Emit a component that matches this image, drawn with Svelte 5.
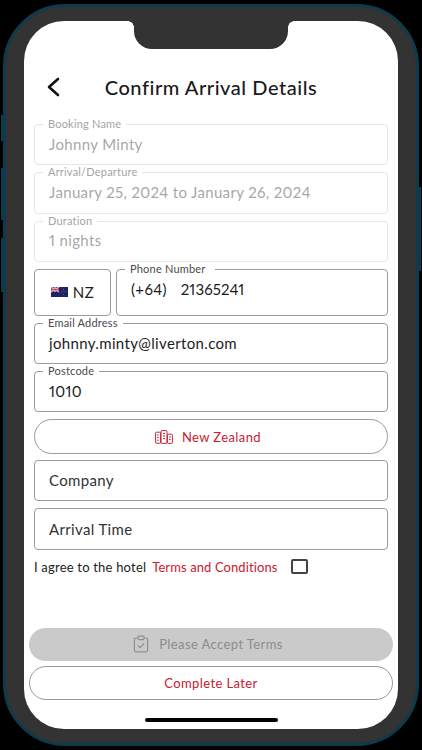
<script>
  const locked = [
    { label: 'Booking Name', value: 'Johnny Minty' },
    { label: 'Arrival/Departure', value: 'January 25, 2024 to January 26, 2024' },
    { label: 'Duration', value: '1 nights' }
  ];

  let agreed = $state(false);
</script>

<div class="phone">
  <span class="side side--mute"></span>
  <span class="side side--up"></span>
  <span class="side side--down"></span>
  <span class="side side--power"></span>

  <main class="screen">
    <div class="notch"></div>

    <header class="header">
      <button type="button" class="back" aria-label="Back">
        <svg width="14" height="20" viewBox="0 0 14 20" fill="none">
          <path d="M12 2 3 10l9 8" stroke="#111" stroke-width="2.6" stroke-linecap="round" stroke-linejoin="round" />
        </svg>
      </button>
      <h1>Confirm Arrival Details</h1>
    </header>

    <form class="form">
      {#each locked as item (item.label)}
        <div class="field field--locked">
          <span class="legend">{item.label}</span>
          <span class="value">{item.value}</span>
        </div>
      {/each}

      <div class="phone-row">
        <button type="button" class="country">
          <svg width="17" height="10" viewBox="0 0 17 10">
            <rect width="17" height="10" fill="#16246b" />
            <path d="M0 0 8 5M8 0 0 5" stroke="#fff" stroke-width="1.3" />
            <path d="M0 0 8 5M8 0 0 5" stroke="#c8202f" stroke-width=".5" />
            <path d="M4 0v5M0 2.5h8" stroke="#fff" stroke-width="1.6" />
            <path d="M4 0v5M0 2.5h8" stroke="#c8202f" stroke-width=".8" />
            <circle cx="12.5" cy="2.5" r=".7" fill="#d8323c" />
            <circle cx="11" cy="5" r=".7" fill="#d8323c" />
            <circle cx="14.2" cy="4.6" r=".7" fill="#d8323c" />
            <circle cx="12.5" cy="7.6" r=".7" fill="#d8323c" />
          </svg>
          NZ
        </button>
        <div class="field field--tall">
          <span class="legend legend--wide">Phone Number</span>
          <span class="value"><span class="dial">(+64)</span><span class="digits">21365241</span></span>
        </div>
      </div>

      <div class="field">
        <span class="legend">Email Address</span>
        <span class="value">johnny.minty@liverton.com</span>
      </div>
      <div class="field">
        <span class="legend">Postcode</span>
        <span class="value">1010</span>
      </div>

      <button type="button" class="region">
        <svg width="18" height="14" viewBox="0 0 18 14" fill="none" stroke="#c8202f" stroke-width="1">
          <rect x=".6" y="2.2" width="5" height="11" rx="1" />
          <rect x="6" y=".6" width="6" height="12.8" rx="1" />
          <rect x="12.4" y="4.2" width="5" height="9.2" rx="1" />
          <path d="M2.2 5h1.6M2.2 7.6h1.6M2.2 10.2h1.6M8 3.4h2M8 6h2M8 8.6h2M14 7h1.8M14 9.6h1.8" />
        </svg>
        New Zealand
      </button>

      <div class="field field--plain"><span class="value">Company</span></div>
      <div class="field field--plain"><span class="value">Arrival Time</span></div>

      <div class="agree">
        <span>I agree to the hotel</span>
        <a href="#terms">Terms and Conditions</a>
        <button
          type="button"
          class="check"
          class:checked={agreed}
          aria-label="Accept terms"
          aria-pressed={agreed}
          onclick={() => (agreed = !agreed)}
        ></button>
      </div>
    </form>

    <footer class="actions">
      <button type="button" class="pill pill--disabled">
        <svg width="16" height="18" viewBox="0 0 16 18" fill="none" stroke="#8f8f8f" stroke-width="1.2">
          <path d="M5 3H3a1.6 1.6 0 0 0-1.6 1.6v10.6A1.6 1.6 0 0 0 3 16.8h10a1.6 1.6 0 0 0 1.6-1.6V4.6A1.6 1.6 0 0 0 13 3h-2" />
          <rect x="5" y="1.2" width="6" height="3.4" rx="1" />
          <path d="m4.8 10.4 2.2 2.2 4.2-4.2" />
        </svg>
        Please Accept Terms
      </button>
      <button type="button" class="pill pill--outline">Complete Later</button>
    </footer>

    <div class="home"></div>
  </main>
</div>

<style>
  :global(body) {
    margin: 0;
    background: #000;
    overflow: hidden;
  }

  .phone {
    position: relative;
    box-sizing: border-box;
    width: 416px;
    height: 742px;
    margin: 4px 3px;
    padding: 14px 18px;
    border: 3px solid #0e3a4c;
    border-radius: 62px;
    background: #333;
    font-family: Lato, "Liberation Sans", sans-serif;
    font-variant-numeric: proportional-nums;
  }

  .side {
    position: absolute;
    width: 3px;
    background: #0e3a4c;
  }

  .side--mute { left: -5px; top: 108px; height: 26px; }
  .side--up { left: -5px; top: 161px; height: 52px; }
  .side--down { left: -5px; top: 231px; height: 54px; }
  .side--power { right: -5px; top: 180px; height: 84px; }

  .screen {
    position: relative;
    display: flex;
    flex-direction: column;
    height: 100%;
    box-sizing: border-box;
    padding-top: 51px;
    border-radius: 40px;
    background: #fff;
    overflow: hidden;
  }

  .notch {
    position: absolute;
    top: 0;
    left: 110px;
    width: 154px;
    height: 28px;
    border-radius: 0 0 18px 18px;
    background: #333;
  }

  .notch::before,
  .notch::after {
    content: '';
    position: absolute;
    top: 0;
    width: 6px;
    height: 6px;
  }

  .notch::before {
    left: -6px;
    background: radial-gradient(circle at 0 100%, #fff 5.5px, #333 6px);
  }

  .notch::after {
    right: -6px;
    background: radial-gradient(circle at 100% 100%, #fff 5.5px, #333 6px);
  }

  .header {
    position: relative;
    display: flex;
    justify-content: center;
    align-items: center;
    height: 30px;
    margin-bottom: 22px;
  }

  .header h1 {
    margin: 0;
    font-size: 20px;
    font-weight: 500;
    letter-spacing: 0.55px;
    color: #1a1a1a;
  }

  .back {
    position: absolute;
    left: 22px;
    top: 5px;
    display: flex;
    padding: 0;
    border: 0;
    background: none;
  }

  .form {
    display: flex;
    flex-direction: column;
    gap: 7px;
    padding: 0 10px;
  }

  .field {
    position: relative;
    display: flex;
    align-items: center;
    box-sizing: border-box;
    height: 41.3px;
    padding: 0 14px 2px;
    border: 1.5px solid #9a9a9a;
    border-radius: 4px;
    color: #1c1c1c;
  }

  .field--locked {
    border: 1px solid #e6e6e6;
    color: #a8a8a8;
  }

  .field--tall {
    flex: 1;
    height: 47px;
    padding-bottom: 6px;
  }

  .field--plain {
    height: 41.5px;
    padding-bottom: 1px;
    color: #333;
  }

  .legend {
    position: absolute;
    top: -8px;
    left: 8px;
    padding: 0 5px;
    background: #fff;
    font-size: 11px;
    letter-spacing: 0.2px;
    color: #4a4a4a;
  }

  .legend--wide {
    padding: 0 9px 0 5px;
  }

  .field--locked .legend {
    color: #a4a4a4;
  }

  .value {
    font-size: 15px;
    letter-spacing: 0.35px;
    white-space: nowrap;
  }

  .dial {
    margin-right: 14px;
  }

  .digits {
    letter-spacing: 0.1px;
  }

  .phone-row {
    display: flex;
    gap: 5px;
  }

  .country {
    display: flex;
    align-items: center;
    justify-content: center;
    gap: 5px;
    width: 77px;
    height: 47px;
    padding: 0;
    border: 1.5px solid #9a9a9a;
    border-radius: 4px;
    background: #fff;
    font: inherit;
    font-size: 15px;
    letter-spacing: 0.4px;
    color: #1c1c1c;
  }

  .region {
    display: flex;
    align-items: center;
    justify-content: center;
    gap: 9px;
    height: 35px;
    margin-bottom: -1.5px;
    padding: 0 6px 0 0;
    border: 1.5px solid #9a9a9a;
    border-radius: 18px;
    background: #fff;
    font: inherit;
    font-size: 13px;
    letter-spacing: 0.4px;
    color: #c8202f;
  }

  .agree {
    display: flex;
    align-items: center;
    height: 18px;
    margin-top: 1px;
    font-size: 13px;
    letter-spacing: 0.2px;
    color: #1c1c1c;
  }

  .agree a {
    margin-left: 6px;
    letter-spacing: 0.1px;
    color: #c8202f;
    text-decoration: none;
  }

  .check {
    width: 17px;
    height: 15px;
    margin-left: 13px;
    padding: 0;
    border: 2px solid #444;
    border-radius: 2px;
    background: #fff;
  }

  .check.checked {
    background: #c8202f;
  }

  .actions {
    display: flex;
    flex-direction: column;
    gap: 5px;
    margin-top: 52px;
    padding: 0 5px;
  }

  .pill {
    display: flex;
    align-items: center;
    justify-content: center;
    box-sizing: border-box;
    height: 34px;
    padding: 0;
    border-radius: 17px;
    font: inherit;
    font-size: 13px;
    letter-spacing: 0.4px;
  }

  .pill--disabled {
    gap: 10px;
    height: 33px;
    padding-right: 6px;
    border: 0;
    background: #cacaca;
    color: #8c8c8c;
  }

  .pill--outline {
    border: 1px solid #999;
    background: #fff;
    color: #c8202f;
  }

  .home {
    position: absolute;
    left: 121px;
    bottom: 7px;
    width: 133px;
    height: 4px;
    border-radius: 2px;
    background: #000;
  }
</style>
